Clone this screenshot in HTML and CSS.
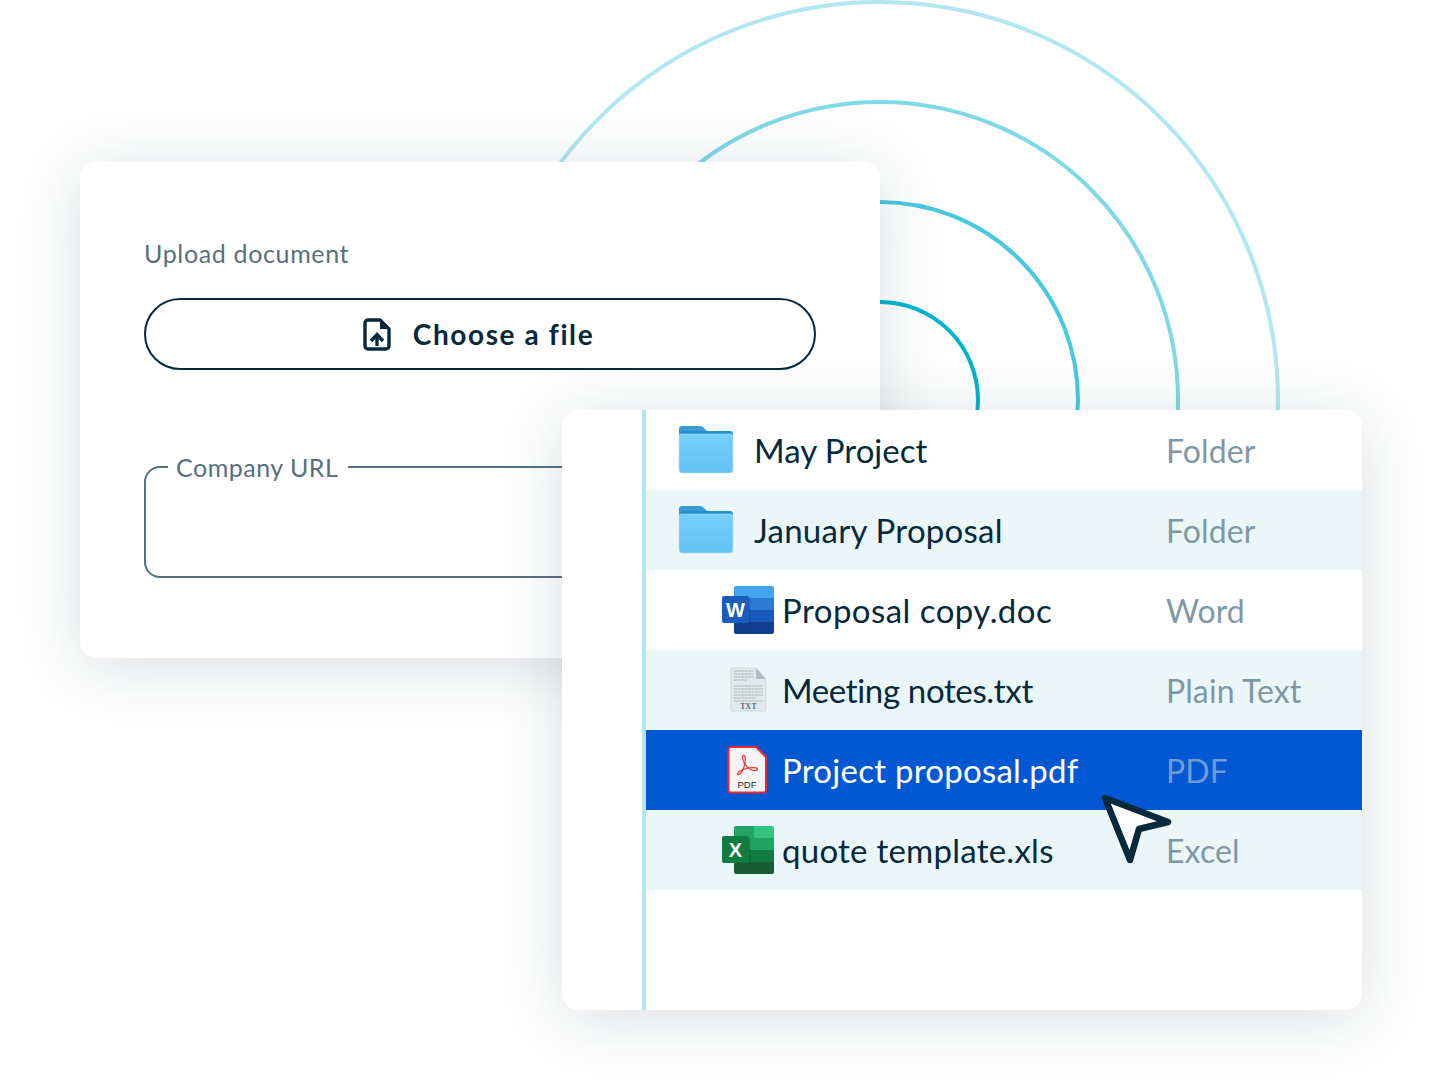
FILE: index.html
```html
<!DOCTYPE html>
<html lang="en">
<head>
<meta charset="utf-8">
<title>Upload document</title>
<link rel="stylesheet" href="styles.css">
</head>
<body>
<main class="stage">
  <svg class="rings" width="1442" height="1090" viewBox="0 0 1442 1090" fill="none">
    <circle class="ring ring-4" cx="880" cy="400" r="398"/>
    <circle class="ring ring-3" cx="880" cy="400" r="298"/>
    <circle class="ring ring-2" cx="880" cy="400" r="198"/>
    <circle class="ring ring-1" cx="880" cy="400" r="98"/>
  </svg>

  <section class="card card-upload">
    <p class="upload-label">Upload document</p>
    <button class="choose" type="button">
      <svg class="upload-icon" width="28" height="33" viewBox="0 0 28 33" fill="none">
        <path d="M5 2h12l9 9v17a3 3 0 0 1-3 3H5a3 3 0 0 1-3-3V5a3 3 0 0 1 3-3z" stroke="#06293b" stroke-width="3.4" stroke-linejoin="round"/>
        <path d="M17 1l10 10H17z" fill="#06293b"/>
        <path d="M14 28V18M8 23l6-6.500 6 6.500" stroke="#06293b" stroke-width="3.400"/>
      </svg>
      <span>Choose a file</span>
    </button>
    <fieldset class="url-field">
      <legend>Company URL</legend>
    </fieldset>
  </section>

  <section class="card card-files">
    <aside class="side"></aside>
    <div class="list">
      <div class="row">
        <div class="name folder-name">
          <svg class="folder" width="56" height="48" viewBox="0 0 56 48"><use href="#folder-art"/></svg>
          <span class="tight-sm">May Project</span>
        </div>
        <span class="type">Folder</span>
      </div>
      <div class="row tint">
        <div class="name folder-name">
          <svg class="folder" width="56" height="48" viewBox="0 0 56 48"><use href="#folder-art"/></svg>
          <span>January Proposal</span>
        </div>
        <span class="type">Folder</span>
      </div>
      <div class="row">
        <div class="name doc-name">
          <svg class="doc" width="52" height="48" viewBox="0 0 52 48">
            <path d="M14 0h36a2 2 0 0 1 2 2v10H12V2a2 2 0 0 1 2-2z" fill="#41a5ee"/>
            <rect x="12" y="12" width="40" height="12" fill="#2b7cd3"/>
            <rect x="12" y="24" width="40" height="12" fill="#185abd"/>
            <path d="M12 36h40v10a2 2 0 0 1-2 2H14a2 2 0 0 1-2-2z" fill="#103f91"/>
            <rect x="12" y="12" width="17" height="27" fill="#0d2f6e" opacity=".25"/>
            <rect x="0" y="10" width="27" height="27" rx="2" fill="#1a5cbe"/>
            <text class="badge-letter" x="13.500" y="30.500">W</text>
          </svg>
          <span class="wide">Proposal copy.doc</span>
        </div>
        <span class="type">Word</span>
      </div>
      <div class="row tint">
        <div class="name doc-name">
          <svg class="doc" width="52" height="48" viewBox="0 0 52 48">
            <path d="M10 2h24l10 11v31a1 1 0 0 1-1 1H10a1 1 0 0 1-1-1V3a1 1 0 0 1 1-1z" fill="#e2e9ea" stroke="#cfd8da"/>
            <path d="M34 2l10 11H35a1 1 0 0 1-1-1z" fill="#aebcc2"/>
            <path class="txt-lines" d="M12 5h19M12 8h19M12 11h20M12 14h13M12 20h29M12 23h29M12 26h29M12 29h29M12 32h22M12 35h29"/>
            <text class="txt-label" x="26.500" y="43">TXT</text>
          </svg>
          <span class="tight">Meeting notes.txt</span>
        </div>
        <span class="type">Plain Text</span>
      </div>
      <div class="row selected">
        <div class="name doc-name">
          <svg class="doc" width="52" height="48" viewBox="0 0 52 48">
            <path d="M9 1h25l10 10v33a2.500 2.500 0 0 1-2.500 2.500H9A2.500 2.500 0 0 1 6.500 44V3.500A2.500 2.500 0 0 1 9 1z" fill="#f6f6f6" stroke="#f0282d" stroke-width="2"/>
            <path d="M18 25c-3 2-3 4.500-1 3.500 4-2 7-11 6-17.500-.5-3-3-2-2.500 1 .8 5 5 10 8 11.500 3 1.500 7 1.500 7-.5s-6-1.500-11-.5c-3 .6-5 1.500-6.500 2.500z" fill="none" stroke="#f0282d" stroke-width="1.100"/>
            <text class="pdf-label" x="25" y="41.500">PDF</text>
          </svg>
          <span>Project proposal.pdf</span>
        </div>
        <span class="type">PDF</span>
      </div>
      <div class="row tint">
        <div class="name doc-name">
          <svg class="doc" width="52" height="48" viewBox="0 0 52 48">
            <path d="M14 0h18v12H12V2a2 2 0 0 1 2-2z" fill="#21a366"/>
            <path d="M32 0h18a2 2 0 0 1 2 2v10H32z" fill="#33c481"/>
            <rect x="12" y="12" width="40" height="12" fill="#21a366"/>
            <rect x="12" y="24" width="40" height="12" fill="#107c41"/>
            <path d="M12 36h40v10a2 2 0 0 1-2 2H14a2 2 0 0 1-2-2z" fill="#185c37"/>
            <rect x="12" y="12" width="17" height="27" fill="#0b4a27" opacity=".25"/>
            <rect x="0" y="10" width="27" height="27" rx="2" fill="#107c41"/>
            <text class="badge-letter" x="13.500" y="30.500">X</text>
          </svg>
          <span>quote template.xls</span>
        </div>
        <span class="type">Excel</span>
      </div>
    </div>
  </section>

  <svg class="pointer" width="76" height="76" viewBox="0 0 76 76">
    <path d="M6 6L69 30 40 37 31 68z" fill="#fff" stroke="#06293b" stroke-width="6.500" stroke-linejoin="round"/>
  </svg>

  <svg class="defs" width="0" height="0">
    <defs>
      <linearGradient id="folder-body" x1="0" y1="0" x2="0" y2="1">
        <stop offset="0" stop-color="#75cffd"/>
        <stop offset="1" stop-color="#64c3f5"/>
      </linearGradient>
      <g id="folder-art">
        <path d="M4 0h17c3 0 4 1 6 3l2 2h23a3 3 0 0 1 3 3v6H1V3a3 3 0 0 1 3-3z" fill="#3a9ad6"/>
        <rect x="3" y="5" width="50" height="3" fill="#1f90d8"/>
        <path d="M4 8h48a3 3 0 0 1 3 3v33a3 3 0 0 1-3 3H4a3 3 0 0 1-3-3V11a3 3 0 0 1 3-3z" fill="url(#folder-body)" stroke="#bfdcec" stroke-width=".6"/>
      </g>
    </defs>
  </svg>
</main>
</body>
</html>
```

FILE: styles.css
```css
* {
  box-sizing: border-box;
}

html,
body {
  margin: 0;
  background: #fff;
}

body {
  font-family: "Lato", "Open Sans", sans-serif;
  color: #06293b;
}

.stage {
  position: relative;
  width: 1442px;
  height: 1090px;
  overflow: hidden;
  background: #fff;
}

.rings {
  position: absolute;
  left: 0;
  top: 0;
}

.ring {
  stroke-width: 4;
}

.ring-1 { stroke: #00b5cf; }
.ring-2 { stroke: #45c9de; }
.ring-3 { stroke: #80d9e8; }
.ring-4 { stroke: #b0e7f1; }

.card {
  position: absolute;
  background: #fff;
  border-radius: 16px;
  box-shadow: 0 8px 64px rgba(24, 48, 70, 0.16);
}

.card-upload {
  left: 80px;
  top: 162px;
  width: 800px;
  height: 496px;
  padding: 75px 64px 0;
}

.upload-label {
  margin: 0 0 29px;
  font-size: 25px;
  line-height: 32px;
  color: #56707e;
  letter-spacing: 0.65px;
}

.choose {
  display: flex;
  align-items: center;
  justify-content: center;
  gap: 22px;
  width: 672px;
  height: 72px;
  padding: 0 3px 0 0;
  background: #fff;
  border: 2px solid #06293b;
  border-radius: 36px;
  font: 700 28px "Lato", sans-serif;
  letter-spacing: 1.6px;
  color: #06293b;
}

.url-field {
  width: 672px;
  height: 123px;
  margin: 85px 0 0;
  padding: 0 0 0 22px;
  border: 2px solid #56707e;
  border-radius: 16px;
}

.url-field legend {
  padding: 0 10px 0 8px;
  font-size: 25px;
  line-height: 24px;
  color: #56707e;
  letter-spacing: 0.5px;
}

.card-files {
  left: 562px;
  top: 410px;
  display: flex;
  width: 800px;
  height: 600px;
  overflow: hidden;
}

.side {
  width: 84px;
  border-right: 4px solid #b0e7f1;
}

.list {
  flex: 1;
}

.row {
  display: grid;
  grid-template-columns: 520px 1fr;
  align-items: center;
  height: 80px;
  font-size: 33px;
  letter-spacing: 0.25px;
}

.tint {
  background: #ebf6f9;
}

.selected {
  background: #0258d3;
  color: #fff;
}

.name {
  display: flex;
  align-items: center;
}

.folder-name {
  gap: 20px;
  padding-left: 32px;
}

.doc-name {
  gap: 8px;
  padding-left: 76px;
}

.tight {
  letter-spacing: -0.35px;
}

.tight-sm {
  letter-spacing: 0;
}

.wide {
  letter-spacing: 0.45px;
}

.type {
  font-size: 32px;
  letter-spacing: 0.1px;
  color: #7f98a5;
}

.selected .type {
  color: #6f9ad6;
}

.badge-letter {
  font: 700 20px "Liberation Sans", sans-serif;
  letter-spacing: 0;
  fill: #fff;
  text-anchor: middle;
}

.txt-lines {
  fill: none;
  stroke: #a9b4b8;
  stroke-width: 1.200;
  stroke-dasharray: 3 .5;
}

.txt-label {
  font: 700 7.5px "Liberation Serif", serif;
  letter-spacing: 0.4px;
  fill: #5c6b72;
  text-anchor: middle;
}

.pdf-label {
  font: 400 9.500px "Liberation Sans", sans-serif;
  letter-spacing: 0;
  fill: #2a2a2a;
  text-anchor: middle;
}

.pointer {
  position: absolute;
  left: 1099px;
  top: 792px;
}

.defs {
  position: absolute;
}
```
